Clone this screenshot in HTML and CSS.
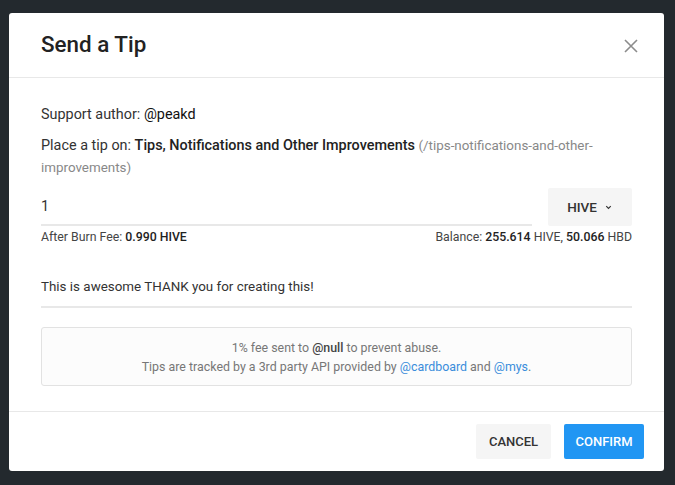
FILE: index.html
```html
<!DOCTYPE html>
<html>
<head>
<meta charset="utf-8">
<link rel="stylesheet" href="styles.css">
</head>
<body>
<div class="backdrop">
  <div class="modal">
    <div class="modal-header">
      <h2 class="title">Send a Tip</h2>
      <button class="close" aria-label="Close">
        <svg width="14" height="14" viewBox="0 0 14 14"><path d="M1 1 L13 13 M13 1 L1 13" stroke="#8c8c8c" stroke-width="1.6" fill="none"/></svg>
      </button>
    </div>
    <div class="modal-body">
      <p class="line">Support author: <span class="author">@peakd</span></p>
      <p class="line place">Place a tip on: <span class="strong">Tips, Notifications and Other Improvements</span> <span class="muted">(/tips-notifications-and-other-improvements)</span></p>
      <div class="amount-row">
        <div class="amount-input">1</div>
        <button class="currency">HIVE <svg width="9" height="9" viewBox="0 0 10 10"><path d="M2.5 3.5 L5 6 L7.5 3.5" stroke="#333" stroke-width="1.3" fill="none"/></svg></button>
      </div>
      <div class="fee-row">
        <span>After Burn Fee: <b>0.990 HIVE</b></span>
        <span>Balance: <b>255.614</b> HIVE, <b>50.066</b> HBD</span>
      </div>
      <div class="message">This is awesome THANK you for creating this!</div>
      <div class="info">
        <div>1% fee sent to <b>@null</b> to prevent abuse.</div>
        <div>Tips are tracked by a 3rd party API provided by <a class="link">@cardboard</a> and <a class="link">@mys</a>.</div>
      </div>
    </div>
    <div class="modal-footer">
      <button class="btn cancel">CANCEL</button>
      <button class="btn confirm">CONFIRM</button>
    </div>
  </div>
</div>
</body>
</html>
```
FILE: styles.css
```css
* { box-sizing: border-box; }
html, body { margin: 0; padding: 0; }
body {
  background: #23292e;
  font-family: Roboto, "Liberation Sans", sans-serif;
  color: #333;
  width: 675px;
  height: 485px;
  overflow: hidden;
}
.backdrop {
  padding: 13px 11px 0 9px;
}
.modal {
  background: #fff;
  border-radius: 3px;
  width: 655px;
  height: 458px;
  display: flex;
  flex-direction: column;
}
.modal-header {
  height: 65px;
  border-bottom: 1px solid #e8e8e8;
  display: flex;
  align-items: center;
  justify-content: space-between;
  padding: 0 26px 0 32px;
}
.title {
  margin: 0;
  font-size: 22.4px;
  font-weight: 500;
  color: #222;
  padding-bottom: 2px;
}
.close {
  border: 0;
  background: none;
  padding: 0;
  width: 14px;
  height: 14px;
  display: flex;
  margin-top: 1px;
}
.modal-body {
  padding: 26px 32px 0 32px;
  flex: 1;
}
.line {
  margin: 0;
  font-size: 14.4px;
  line-height: 22px;
  color: #333;
}
.author { color: #111; }
.strong { font-weight: 500; color: #222; }
.place { margin-top: 9px; }
.muted { color: #888; font-size: 13.4px; }
.amount-row {
  display: flex;
  align-items: stretch;
  margin-top: 9px;
  height: 38px;
}
.amount-input {
  flex: 1;
  border-bottom: 2px solid #e8e8e8;
  font-size: 14.4px;
  padding-top: 10px;
  color: #333;
  margin-right: 16px;
}
.currency {
  width: 84px;
  border: 0;
  background: #f5f5f5;
  font-family: inherit;
  font-size: 13.5px;
  font-weight: 500;
  color: #333;
  display: flex;
  align-items: center;
  justify-content: center;
  gap: 7px;
  border-radius: 2px;
}
.fee-row {
  display: flex;
  justify-content: space-between;
  font-size: 12.3px;
  color: #444;
  margin-top: 3px;
  line-height: 16px;
}
.fee-row b { font-weight: 500; color: #222; }
.message {
  margin-top: 33px;
  font-size: 13.4px;
  color: #333;
  padding-bottom: 10px;
  border-bottom: 2px solid #e8e8e8;
  line-height: 18px;
}
.info {
  margin-top: 19px;
  border: 1px solid #e2e2e2;
  border-radius: 3px;
  background: #fcfcfc;
  text-align: center;
  font-size: 12.4px;
  line-height: 19px;
  color: #777;
  padding: 10px 0 9px;
}
.info b { font-weight: 500; color: #444; }
.link { color: #3a8ddb; text-decoration: none; }
.modal-footer {
  height: 60px;
  border-top: 1px solid #e8e8e8;
  display: flex;
  justify-content: flex-end;
  align-items: center;
  padding: 0 20px;
  gap: 13px;
}
.btn {
  border: 0;
  height: 35px;
  font-family: inherit;
  font-size: 13px;
  font-weight: 500;
  border-radius: 2px;
}
.cancel { background: #f5f5f5; color: #333; width: 75px; }
.confirm { background: #2196f3; color: #fff; width: 80px; }
```
